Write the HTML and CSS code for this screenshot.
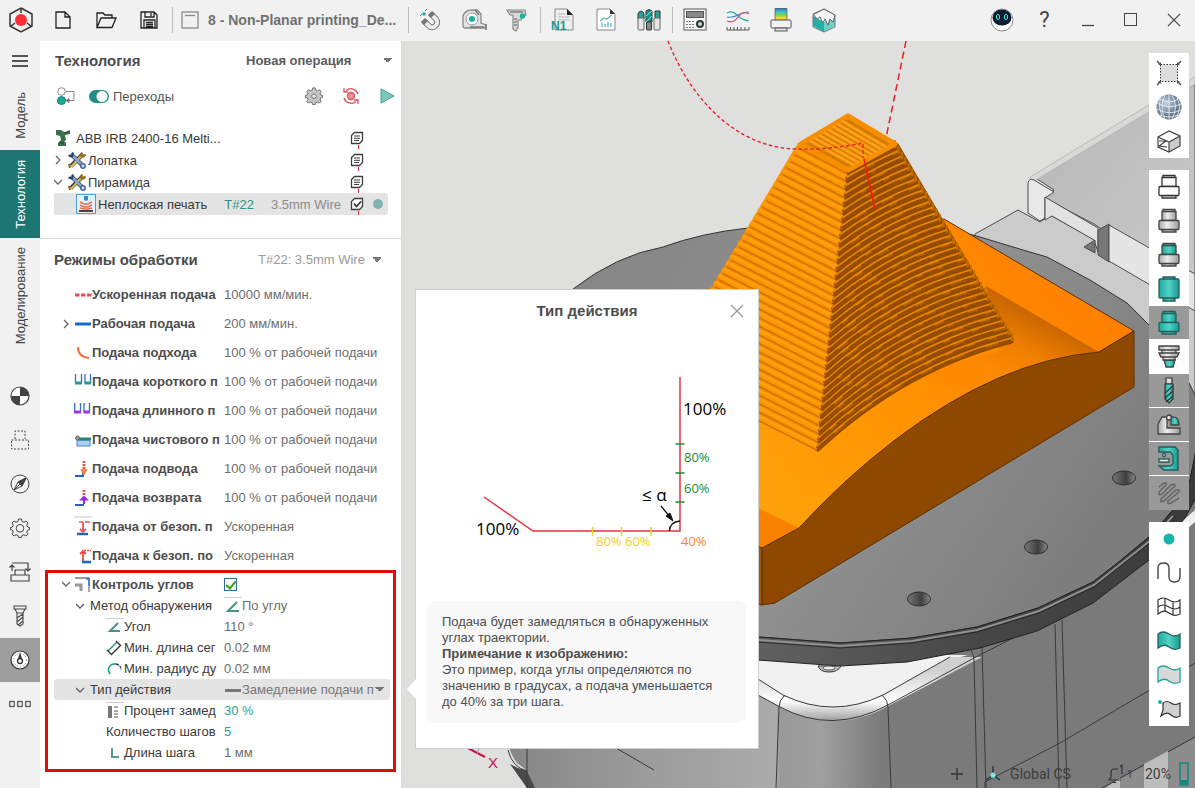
FILE: index.html
```html
<!DOCTYPE html>
<html lang="ru">
<head>
<meta charset="utf-8">
<title>8 - Non-Planar printing</title>
<link rel="stylesheet" href="styles.css">
</head>
<body>
<svg class="defs" width="0" height="0" aria-hidden="true">
  <defs>
    <linearGradient id="gTeal"><stop offset="0" stop-color="#1fa99d"/><stop offset=".5" stop-color="#52d3c8"/><stop offset="1" stop-color="#16998e"/></linearGradient>
    <linearGradient id="gGray"><stop offset="0" stop-color="#a9a9a9"/><stop offset=".4" stop-color="#eee"/><stop offset="1" stop-color="#9c9c9c"/></linearGradient>
    <linearGradient id="gRainbow" x2="0" y2="1"><stop offset="0" stop-color="#4a62b8"/><stop offset=".3" stop-color="#35c3c8"/><stop offset=".55" stop-color="#7fd34c"/><stop offset=".8" stop-color="#ffdf2e"/><stop offset="1" stop-color="#f26522"/></linearGradient>
    <radialGradient id="gBall" cx=".4" cy=".35"><stop offset="0" stop-color="#c3cfdc"/><stop offset="1" stop-color="#66798e"/></radialGradient>
    <g id="wrench">
      <path d="M3 3l12 12" stroke="#4b3d14" stroke-width="4"/><path d="M15 3L3 15" stroke="#1f355c" stroke-width="4"/>
      <path d="M15 3L3 16" stroke="#e0b83c" stroke-width="2.4"/><path d="M14 1.500l-1 3 2.500 1 2-2M1 13l1 4" stroke="#8a6a1c" stroke-width="2" fill="none"/>
      <path d="M3 3l12 12" stroke="#7fa6de" stroke-width="2.600"/><path d="M.5 4.500l3.500 1L5 1.500" stroke="#27426f" stroke-width="2" fill="none"/>
      <circle cx="15" cy="15" r="2.200" fill="#dbe7f8" stroke="#3f66a3" stroke-width="1.500"/>
    </g>
    <g id="note" fill="none" stroke="#3d3d3d"><path d="M4.500 1.500h8v8l-3 3h-8v-8z" fill="#fff" stroke-width="1.300" stroke-linejoin="round"/><path d="M4 5h6M4 7.300h6M4 9.500h5" stroke-width="1"/></g>
  </defs>
</svg>

<div class="app">
<header class="topbar">
  <button class="tb logo" aria-label="Меню приложения"><svg width="28" height="28" viewBox="0 0 28 28"><path d="M14 2l11 6v12l-11 6-11-6V8z" fill="none" stroke="#333" stroke-width="1.500"/><path d="M14 2v5M4 20l4-3M24 20l-4-3" stroke="#333" stroke-width="1.500"/><circle cx="14" cy="14" r="6" fill="#fb2e35"/></svg></button>
  <button class="tb" aria-label="Новый"><svg width="20" height="20" viewBox="0 0 20 20" fill="none" stroke="#222" stroke-width="1.300"><path d="M3 2h9l5 5v11H3zM12 2v5h5"/></svg></button>
  <button class="tb" aria-label="Открыть"><svg width="22" height="20" viewBox="0 0 22 20" fill="none" stroke="#222" stroke-width="1.300"><path d="M2 17.500V3h6l2 2h7v3M2 17.500L6 8h15l-4 9.500z"/></svg></button>
  <button class="tb" aria-label="Сохранить"><svg width="20" height="20" viewBox="0 0 20 20" fill="none" stroke="#222" stroke-width="1.300"><path d="M2 2h13l3 3v13H2zM6 2v5h9V2M12 3v3M5 18v-8h11v8M7 12.500h7M7 14.500h7M7 16.500h7"/></svg></button>
  <span class="sep"></span>
  <div class="doc"><svg width="18" height="18" viewBox="0 0 18 18" fill="none" stroke="#8a8a8a" stroke-width="1.300"><rect x="1" y="1" width="16" height="16"/><path d="M4 4.500h10"/></svg><span class="doc-title">8 - Non-Planar printing_De...</span></div>
  <span class="sep flush"></span>
  <button class="tb" aria-label="Привязка"><svg width="24" height="24" viewBox="0 0 24 24" fill="none"><path d="M12 6l5 5c4 5-3 11-7 7l-5-5" stroke="#777" stroke-width="6"/><path d="M12 6l5 5c4 5-3 11-7 7l-5-5" stroke="#ececec" stroke-width="4"/><path d="M11 5l3 3M4 12l3 3" stroke="#777" stroke-width="6"/><circle cx="5" cy="6" r="1.800" fill="#1fb0a2"/><path d="M1 8l2-2M6 3l2-2" stroke="#777"/></svg></button>
  <button class="tb" aria-label="Измерить"><svg width="26" height="24" viewBox="0 0 26 24"><path d="M2 18V8q2-6 9-6h5l4 4v9l5 2v3H5q-3 0-3-2z" fill="#e4e4e4" stroke="#888" stroke-width="1.300"/><circle cx="11" cy="11" r="6" fill="#fff" stroke="#999"/><circle cx="11" cy="11" r="3" fill="#1fb0a2"/><path d="M14 2l4 5M9 19h14M25 16v6" stroke="#777" stroke-width="1.500"/></svg></button>
  <button class="tb" aria-label="Штангенциркуль"><svg width="24" height="24" viewBox="0 0 24 24"><path d="M2 2h18l1 5-4 1-1 4h-3v8l-2 3-3-2V7H5z" fill="#dadada" stroke="#888" stroke-width="1.200"/><path d="M9 11h3M9 14h3M9 17h3M5 4h13" stroke="#555"/><circle cx="17.500" cy="8" r="2.700" fill="#1fb0a2"/></svg></button>
  <span class="sep"></span>
  <button class="tb" aria-label="Программа"><svg width="24" height="24" viewBox="0 0 24 24"><path d="M4 1h12l6 6v15H4z" fill="#eee" stroke="#888"/><path d="M16 1v6h6z" fill="#222"/><path d="M7 6h7M7 9h12M7 12h12" stroke="#bbb"/><text x="0" y="22" class="n1">N1</text></svg></button>
  <button class="tb" aria-label="Отчёт"><svg width="24" height="24" viewBox="0 0 24 24"><path d="M3 1h13l5 5v16H3z" fill="#fff" stroke="#888"/><path d="M16 1v5h5z" fill="#333"/><path d="M8 19v-4M11 19v-3M14 19v-5M17 19v-4M6 13l4-3 3 1 5-4" fill="none" stroke="#5db5b8" stroke-width="1.300"/></svg></button>
  <button class="tb" aria-label="Инструменты"><svg width="26" height="24" viewBox="0 0 26 24"><path d="M2 11V6q0-2 3-3 3 1 3 3v5zM19 11V3h5v8z" fill="#27a398" stroke="#333"/><path d="M10 14V3q3-3 6 0v11z" fill="#14988d" stroke="#333"/><path d="M10 8l6-5M10 14l6-6" stroke="#7be0d6"/><rect x="2" y="10" width="6" height="12" rx="1" fill="#e6e6e6" stroke="#666"/><rect x="10.500" y="14" width="5" height="8" rx="1" fill="#888" stroke="#333"/><rect x="18" y="10" width="6" height="12" rx="1" fill="#e6e6e6" stroke="#666"/></svg></button>
  <span class="sep"></span>
  <button class="tb" aria-label="Калькулятор"><svg width="24" height="24" viewBox="0 0 24 24"><rect x="1" y="1" width="22" height="21" fill="#f7f7f7" stroke="#555"/><rect x="3.500" y="3.500" width="17" height="6" fill="#888" stroke="#555"/><path d="M3 13.500h9M3 16.500h9M3 19.500h9" stroke="#777" stroke-dasharray="2 1"/><circle cx="17" cy="16" r="4" fill="#333"/><circle cx="17" cy="16" r="2" fill="#a4e4dd"/></svg></button>
  <button class="tb" aria-label="График"><svg width="24" height="24" viewBox="0 0 24 24" fill="none" stroke-width="1.200"><path d="M1 5q5-3 10 2t12 6" stroke="#27ad9f"/><path d="M1 9q6 1 11-2t11-3" stroke="#3f87c7"/><path d="M1 13q6 3 11-4t11-3" stroke="#d94a7b"/><path d="M1 19v3h22v-3M4.500 19v3M8 19v3M11.500 19v3M15 19v3M19 19v3" stroke="#555" stroke-width="1"/></svg></button>
  <button class="tb" aria-label="Анализ"><svg width="22" height="24" viewBox="0 0 22 24"><rect x="5" y="0" width="12" height="13" rx="1" fill="url(#gRainbow)" stroke="#555" stroke-width=".7"/><rect x="1" y="12" width="20" height="8" rx="1" fill="#f3f3f3" stroke="#555"/><rect x="5" y="20" width="12" height="3" fill="#ddd" stroke="#555"/></svg></button>
  <button class="tb" aria-label="Симуляция"><svg width="26" height="26" viewBox="0 0 26 26"><path d="M2 9l11 6v10L2 19z" fill="#26b0a3"/><path d="M13 15l11-6v10l-11 6z" fill="#6bcfc6"/><path d="M13 2l11 6-2 7-3-3-2 6-3-6-2 4-3-6-3 2-4-5z" fill="#f5f5f5" stroke="#666"/><path d="M13 2L2 8v12l11 5 11-5V8z" fill="none" stroke="#777"/></svg></button>
  <div class="window-tools">
    <button class="tb" aria-label="Помощник"><svg width="24" height="24" viewBox="0 0 24 24"><circle cx="12" cy="12" r="11" fill="#fff" stroke="#8c8c94"/><ellipse cx="12" cy="9.500" rx="9.500" ry="8" fill="#0b1c33"/><rect x="6.500" y="6.500" width="3" height="5" rx="1.500" fill="none" stroke="#42e3c5"/><rect x="14.500" y="6.500" width="3" height="5" rx="1.500" fill="none" stroke="#42e3c5"/></svg></button>
    <button class="tb help" aria-label="Справка">?</button>
    <button class="tb" aria-label="Свернуть"><svg width="14" height="14"><path d="M1 12.500h12" stroke="#444" stroke-width="1.300"/></svg></button>
    <button class="tb" aria-label="Развернуть"><svg width="14" height="14"><rect x=".5" y=".5" width="12" height="12" fill="none" stroke="#444"/></svg></button>
    <button class="tb" aria-label="Закрыть"><svg width="14" height="14"><path d="M1 1l12 12M13 1L1 13" stroke="#555" stroke-width="1.200"/></svg></button>
  </div>
</header>

<nav class="rail">
  <button class="rail-menu" aria-label="Меню"><svg width="16" height="14"><path d="M0 2h16M0 7h16M0 12h16" stroke="#555" stroke-width="2"/></svg></button>
  <button class="rail-tab t1"><span>Модель</span></button>
  <button class="rail-tab t2 active"><span>Технология</span></button>
  <button class="rail-tab t3"><span>Моделирование</span></button>
  <button class="rail-icon" aria-label="Центр"><svg width="20" height="20" viewBox="0 0 20 20"><circle cx="10" cy="10" r="9" fill="#fff" stroke="#444" stroke-width="1.200"/><path d="M10 10V1a9 9 0 0 1 9 9zM10 10v9a9 9 0 0 1-9-9z" fill="#444"/></svg></button>
  <button class="rail-icon" aria-label="Заготовка"><svg width="20" height="20" viewBox="0 0 20 20" fill="none" stroke="#444" stroke-dasharray="2 1.500"><path d="M5 9V1h10v8"/><rect x="1.500" y="10" width="17" height="9"/></svg></button>
  <button class="rail-icon" aria-label="Стратегия"><svg width="20" height="20" viewBox="0 0 20 20" fill="none" stroke="#444"><circle cx="10" cy="10" r="9"/><path d="M16 4l-4 8-8 4 4-8z"/><path d="M8 8l4 4 4-8zM5 15l6-6" fill="#444"/></svg></button>
  <button class="rail-icon" aria-label="Настройки"><svg width="20" height="20" viewBox="0 0 20 20" fill="none" stroke="#444"><path d="M8.500 1h3l.5 2.500 2 .8L16 3l2 2-1.200 2 .8 2 2 .5v2l-2 .7-.8 2L18 16l-2 2-2-1.300-2 .8-.5 2h-3l-.5-2-2-.8L4 18l-2-2 1.200-2-.8-2-2-.5v-2l2-.5.8-2L2 5l2-2 2 1.300 2-.8z"/><circle cx="10" cy="10.300" r="3.800"/></svg></button>
  <button class="rail-icon" aria-label="Подходы"><svg width="22" height="20" viewBox="0 0 22 20" fill="none" stroke="#444" stroke-width="1.200"><path d="M3 9V3M3 1h16v8M.500 5.500L3 3l2.500 2.500M16.500 6.500L19 9l2.500-2.500M6 13V8h10v5M2 13h18v6H2z"/></svg></button>
  <button class="rail-icon" aria-label="Инструмент"><svg width="14" height="22" viewBox="0 0 14 22" fill="none" stroke="#444" stroke-width="1.100"><path d="M1 1h12v3H1zM2 4l2 4h6l2-4M4 8v11l3 2 3-2V8M4 13l6-4M4 17l6-5M5 20l5-4"/></svg></button>
  <button class="rail-icon on" aria-label="Режимы"><svg width="20" height="20" viewBox="0 0 20 20"><circle cx="10" cy="10" r="9" fill="#fff" stroke="#333" stroke-width="1.200"/><circle cx="10" cy="11" r="2.500" fill="none" stroke="#333" stroke-width="1.300"/><path d="M8 9l2-7 2 7z" fill="#333"/><circle cx="10" cy="10" r="6.500" fill="none" stroke="#777" stroke-dasharray="1 2"/></svg></button>
  <button class="rail-icon" aria-label="Ещё"><svg width="22" height="8" viewBox="0 0 22 8" fill="none" stroke="#555" stroke-width="1.200"><rect x=".7" y="1.500" width="4.500" height="5"/><rect x="8.700" y="1.500" width="4.500" height="5"/><rect x="16.700" y="1.500" width="4.500" height="5"/></svg></button>
</nav>

<aside class="panel">
  <section class="tech">
    <div class="panel-head">
      <h2>Технология</h2>
      <select class="pick bold" aria-label="Новая операция"><option>Новая операция</option></select>
    </div>
    <div class="tools-row">
      <button class="plain" aria-label="Порядок"><svg width="18" height="18" viewBox="0 0 18 18" fill="none" stroke="#888"><circle cx="4.500" cy="4.500" r="3.800"/><path d="M9 4.500h8v9h-7"/><circle cx="4.500" cy="13.500" r="4" fill="#1aa898" stroke="#1a7f76"/><path d="M12 11.500l-3 2 3 2z" fill="#555"/></svg></button>
      <label class="toggle"><input type="checkbox" checked><span>Переходы</span></label>
      <button class="plain push" aria-label="Параметры"><svg width="18" height="18" viewBox="0 0 20 20"><path d="M8.500 1h3l.5 2.500 2 .8L16 3l2 2-1.200 2 .8 2 2 .5v2l-2 .7-.8 2L18 16l-2 2-2-1.300-2 .8-.5 2h-3l-.5-2-2-.8L4 18l-2-2 1.200-2-.8-2-2-.5v-2l2-.5.8-2L2 5l2-2 2 1.300 2-.8z" fill="#c4c4c4" stroke="#666"/><circle cx="10" cy="10.300" r="2.500" fill="#eee" stroke="#666"/></svg></button>
      <button class="plain" aria-label="Сброс"><svg width="18" height="18" viewBox="0 0 18 18" fill="none" stroke="#e0505a" stroke-width="1.300"><path d="M16 7A7.500 7.500 0 0 0 4 3.500M2 11a7.500 7.500 0 0 0 12 3.500M2 1v4h4M16 17v-4h-4"/><circle cx="9" cy="9" r="3.500" fill="#ef8f95"/></svg></button>
      <button class="plain" aria-label="Запуск"><svg width="16" height="16" viewBox="0 0 16 16"><path d="M2 1l13 7-13 7z" fill="#7cc9bb" stroke="#3d9a8c"/></svg></button>
    </div>
    <ul class="tree">
      <li><svg class="lead" width="16" height="18" viewBox="0 0 16 18"><path d="M1 1h5l3 2h6v2l-5 1 1 5-2 2 1 2h1v2H3v-3l3-3-1-4-4-1z" fill="#3f6e4c"/><path d="M10 4l5-2M4 14h7" stroke="#29503a" stroke-width="1.500"/></svg><span class="tree-name">ABB IRB 2400-16 Melti...</span><svg class="mark" width="14" height="14"><use href="#note"/></svg></li>
      <li><svg class="chev" width="9" height="10"><path d="M2 1l4 4-4 4" fill="none" stroke="#666" stroke-width="1.300"/></svg><svg width="18" height="18"><use href="#wrench"/></svg><span class="tree-name">Лопатка</span><svg class="mark" width="14" height="14"><use href="#note"/></svg></li>
      <li><svg class="chev" width="9" height="10"><path d="M0 3l4 4 4-4" fill="none" stroke="#666" stroke-width="1.300"/></svg><svg width="18" height="18"><use href="#wrench"/></svg><span class="tree-name">Пирамида</span><svg class="mark" width="14" height="14"><use href="#note"/></svg></li>
      <li class="sel"><svg class="op" width="20" height="20" viewBox="0 0 20 20"><rect x=".5" y=".5" width="19" height="19" fill="#e3f1fc" stroke="#4d9ee0"/><path d="M8 2h4v4l-2 1-2-1z" fill="#3f86c5"/><path d="M4 8l4 2h4l4-2M4 11l4 2h4l4-2M4 14l4 1h4l4-1" stroke="#ea6a4c" stroke-width="1.500" fill="none"/><path d="M3 17h14" stroke="#444" stroke-width="2"/></svg><span class="tree-name">Неплоская печать</span><span class="tool-no">T#22</span><span class="tool-name">3.5mm Wire</span><svg class="mark" width="14" height="14"><path d="M4.500 1.500h8v8l-3 3h-8v-8z" fill="#fff" stroke="#3d3d3d" stroke-width="1.300"/><path d="M4 6.500l2.500 3 4.500-5" fill="none" stroke="#333" stroke-width="1.800"/></svg><i class="dot"></i></li>
    </ul>
  </section>

  <section class="modes">
    <div class="panel-head second">
      <h2>Режимы обработки</h2>
      <select class="pick soft" aria-label="Инструмент"><option>T#22: 3.5mm Wire</option></select>
    </div>
    <div class="rows">
      <div class="row"><div class="name b i1"><svg width="18" height="16"><path d="M1 8h17" stroke="#ef4a5b" stroke-width="3" stroke-dasharray="4.500 1.500"/></svg>Ускоренная подача</div><span class="val">10000 мм/мин.</span></div>
      <div class="row"><div class="name b i0"><svg class="chev" width="9" height="10"><path d="M2 1l4 4-4 4" fill="none" stroke="#666" stroke-width="1.300"/></svg><svg width="18" height="16"><path d="M1 8h16" stroke="#1769d1" stroke-width="3"/></svg>Рабочая подача</div><span class="val">200 мм/мин.</span></div>
      <div class="row"><div class="name b i1"><svg width="18" height="16"><path d="M4 2q0 10 11 11" fill="none" stroke="#f0713c" stroke-width="2"/></svg>Подача подхода</div><span class="val">100 % от рабочей подачи</span></div>
      <div class="row"><div class="name b i1"><svg width="18" height="16"><path d="M1.500 0v9M7.500 0v9M11 0v9M16.500 0v9" stroke="#2f6ec0" stroke-width="1.300"/><path d="M1 9h7M10.500 9h6.500" stroke="#1f9b8c" stroke-width="3"/></svg>Подача короткого п</div><span class="val">100 % от рабочей подачи</span></div>
      <div class="row"><div class="name b i1"><svg width="18" height="16"><path d="M.7 0v9M6.500 0v9M10 0v9M15.500 0v9" stroke="#2f6ec0" stroke-width="1.300"/><path d="M0 9h7M9.500 9h6.500" stroke="#9a35e8" stroke-width="3"/></svg>Подача длинного п</div><span class="val">100 % от рабочей подачи</span></div>
      <div class="row"><div class="name b i1"><svg width="18" height="16"><rect x="3" y="8" width="13" height="6" fill="#a8cef5" stroke="#4d83c2"/><path d="M4 7h13" stroke="#238575" stroke-width="3"/><circle cx="3.500" cy="6" r="2" fill="#999" stroke="#666"/></svg>Подача чистового п</div><span class="val">100 % от рабочей подачи</span></div>
      <div class="row"><div class="name b i1"><svg width="18" height="18"><path d="M1 16h8v-5" fill="none" stroke="#1e66c5" stroke-width="2"/><path d="M10 1v8" stroke="#e75a50" stroke-width="3" stroke-dasharray="2 1"/><path d="M7.500 10h5L10 14z" stroke="#fa7c38" stroke-width="1.500" fill="#fa7c38"/></svg>Подача подвода</div><span class="val">100 % от рабочей подачи</span></div>
      <div class="row"><div class="name b i1"><svg width="18" height="18"><path d="M1 16h9" stroke="#1e66c5" stroke-width="2"/><path d="M10 1v5" stroke="#e75a50" stroke-width="3" stroke-dasharray="2 1"/><path d="M10 15v-4M7.500 10.500L10 8l2.500 2.500z" stroke="#8f2ae0" stroke-width="2" fill="#8f2ae0"/></svg>Подача возврата</div><span class="val">100 % от рабочей подачи</span></div>
      <div class="row"><div class="name b i1"><svg width="18" height="22"><path d="M0 1h18" stroke="#c9c9c9"/><path d="M5 6h4M11 6h5" stroke="#e9545f" stroke-width="1.500"/><path d="M9 6v10M6 13l3 3 3-3" fill="none" stroke="#e9545f" stroke-width="1.800"/><path d="M3 18h11" stroke="#1e66c5" stroke-width="2.500"/></svg>Подача от безоп. п</div><span class="val">Ускоренная</span></div>
      <div class="row"><div class="name b i1"><svg width="18" height="18"><path d="M9 14V5M6 7l3-3 3 3" fill="none" stroke="#f04a44" stroke-width="1.800"/><path d="M10 3.500h7" stroke="#f04a44" stroke-width="1.500" stroke-dasharray="2 1"/><path d="M8 15h9" stroke="#1e66c5" stroke-width="2.500"/></svg>Подача к безоп. по</div><span class="val">Ускоренная</span></div>
    </div>
    <div class="rows corner">
      <div class="row first"><div class="name b i0"><svg class="chev" width="9" height="10"><path d="M0 3l4 4 4-4" fill="none" stroke="#666" stroke-width="1.300"/></svg><svg width="18" height="18"><path d="M1 3h14v14" fill="none" stroke="#777" stroke-width="1.300"/><path d="M12 4h3v7" fill="none" stroke="#2f78d0" stroke-width="1.500"/><path d="M1 10h6v6" fill="none" stroke="#999" stroke-width="3"/></svg><label for="corners">Контроль углов</label></div><input class="check" type="checkbox" id="corners" checked></div>
      <div class="row"><div class="name i2"><svg class="chev" width="9" height="10"><path d="M0 3l4 4 4-4" fill="none" stroke="#666" stroke-width="1.300"/></svg>Метод обнаружения</div><svg width="18" height="18"><path d="M0 .5h18" stroke="#ccc"/><path d="M13 5L4 14h11" fill="none" stroke="#4a9284" stroke-width="2"/></svg><span class="val">По углу</span></div>
      <div class="row"><div class="name i3"><svg width="18" height="18"><path d="M0 .5h18" stroke="#ccc"/><path d="M12 5L4 13h10" fill="none" stroke="#4a9284" stroke-width="2"/></svg>Угол</div><span class="val">110 °</span></div>
      <div class="row"><div class="name i3"><svg width="18" height="18" fill="none"><path d="M2 12l9-9" stroke="#279887" stroke-width="1.500"/><path d="M5 16l10-10M1 11l5 5M10 2l5 5" stroke="#333" stroke-width="1.300"/></svg>Мин. длина сег</div><span class="val">0.02 мм</span></div>
      <div class="row"><div class="name i3"><svg width="18" height="18" fill="none"><path d="M4 14C0 8 5 3 10 4" stroke="#209d86" stroke-width="1.600"/><path d="M10 4q5 1 5 6" stroke="#333" stroke-width="1.300" stroke-dasharray="3 1"/></svg>Мин. радиус ду</div><span class="val">0.02 мм</span></div>
      <div class="row sel"><div class="name i2"><svg class="chev" width="9" height="10"><path d="M0 3l4 4 4-4" fill="none" stroke="#666" stroke-width="1.300"/></svg><label for="action">Тип действия</label></div><svg width="18" height="18"><path d="M1 9.500h16" stroke="#777" stroke-width="3"/></svg><select id="action" class="pick action"><option>Замедление подачи п</option></select></div>
      <div class="row"><div class="name i3"><svg width="18" height="18"><path d="M0 .5h18" stroke="#ccc"/><rect x="2" y="4" width="4" height="12" fill="#777"/><path d="M8 5h4M8 9h4M8 12h4M8 15h4" stroke="#555"/></svg>Процент замед</div><span class="val teal">30 %</span></div>
      <div class="row"><div class="name i3">Количество шагов</div><span class="val teal">5</span></div>
      <div class="row"><div class="name i3"><svg width="18" height="18"><path d="M6 4v9h7" fill="none" stroke="#579b91" stroke-width="2"/></svg>Длина шага</div><span class="val">1 мм</span></div>
    </div>
  </section>
</aside>

<main class="view">
  <svg class="scene" viewBox="402 41 793 747" preserveAspectRatio="xMinYMin slice" role="img" aria-label="Модель">
    <defs>
      <linearGradient id="disk" x1="0" x2="1" y1="0" y2=".4"><stop offset="0" stop-color="#828282"/><stop offset=".6" stop-color="#929292"/><stop offset="1" stop-color="#7d7d7d"/></linearGradient>
      <linearGradient id="rim"><stop offset="0" stop-color="#606060"/><stop offset=".5" stop-color="#474747"/><stop offset="1" stop-color="#3a3a3a"/></linearGradient>
      <linearGradient id="body" gradientUnits="userSpaceOnUse" x1="500" x2="900" y1="0" y2="0"><stop offset="0" stop-color="#858585"/><stop offset=".35" stop-color="#9b9b9b"/><stop offset=".69" stop-color="#ababab"/><stop offset=".7" stop-color="#999"/><stop offset=".8" stop-color="#a0a0a0"/><stop offset=".95" stop-color="#7b7b7b"/><stop offset="1" stop-color="#7a7a7a"/></linearGradient>
      <linearGradient id="topface" gradientUnits="userSpaceOnUse" x1="760" y1="520" x2="1080" y2="270"><stop offset="0" stop-color="#ffa30c"/><stop offset=".4" stop-color="#ff9400"/><stop offset="1" stop-color="#ff8000"/></linearGradient>
      <linearGradient id="hollow" gradientUnits="userSpaceOnUse" x1="1055" y1="315" x2="1018" y2="385"><stop offset="0" stop-color="#c06000"/><stop offset=".55" stop-color="#ee7e00"/><stop offset="1" stop-color="#ff8a00"/></linearGradient>
      <linearGradient id="plate" x1="0" y1="0" x2="1" y2="1"><stop offset="0" stop-color="#b6b6b6"/><stop offset="1" stop-color="#c9c9c9"/></linearGradient>
      <linearGradient id="hole"><stop offset="0" stop-color="#777"/><stop offset=".6" stop-color="#3f3f3f"/><stop offset="1" stop-color="#8a8a8a"/></linearGradient>
      <linearGradient id="lip" gradientUnits="userSpaceOnUse" x1="0" x2="0" y1="670" y2="722"><stop offset="0" stop-color="#d0d0d0"/><stop offset=".6" stop-color="#fff"/><stop offset="1" stop-color="#999"/></linearGradient>
    </defs>
    <rect x="402" y="41" width="793" height="747" fill="#dfdfdd"/>
    <g stroke="#4d4d4d" stroke-linejoin="round">
      <path d="M975 234l43-24 22 12 10-7 145 80v200L960 300z" fill="#cbcbcb"/>
      <path d="M1034 177L1195 84v200l-77-44-24-16-50-26 10-8z" fill="url(#plate)"/>
      <path d="M1034 181L1195 84v-7L1030 177z" fill="#d8d8d6" stroke="#bbb"/>
      <path d="M1028 213v-30q1-5 6-3l20 12-9 6v20l-5 3z" fill="#e8e8e8"/>
      <path d="M1045 197l53 31v24l-4-12-42-24-7 4z" fill="#e2e2e2"/>
      <path d="M1098 230l11-6v38l-11-7z" fill="#777"/><path d="M1109 225l86 49v37l-86-50z" fill="#e5e5e5"/>
      <path d="M1084 247l11-7v13z" fill="#777"/>
    </g>
    <path d="M507 740q4 16 10 23 10 7 10 9l6 16h662V470L960 590 758 655v93z" fill="url(#body)"/>
    <path d="M510 764l8 4 9 3 8 17h-8z" fill="#4a4a4a"/>
    <path d="M1172 530l23-20v12l-23 20z" fill="#eee"/>
    <path d="M758 655h210l-18 5-67 35q-50 25-100 0l-25-15z" fill="#f1f1f1"/>
    <path d="M758 679l25 16q50 24 100 0l67-38h32l-94 49q-52 30-108 1l-22-12z" fill="url(#lip)"/>
    <g fill="none" stroke="#3a3a3a">
      <path d="M758 679l25 16q50 24 100 0l67-38M758 695l22 12q52 28 108-2l86-47 39-20"/>
      <path d="M785 695q-6 5-6 12l-3 81M882 695q6 5 6 12l3 81M971 650q3 5 3 10l3 128M982 646l4 142M1055 624l4 164M1062 620l5 168M985 782l75-39 88-52 47-28M527 748v40M508 750q4 17 19 21M616 748l38 22M985 782v6"/>
    </g>
    <path d="M1102 788l93-51v51z" fill="#8d8d8d"/><path d="M1102 788l93-51" stroke="#333"/><path d="M1120 778v10h-14M1144 764l24-13v37h-24z" fill="#bdbdbd"/>
    <path d="M573 289q44-34 90-42 38-14 85-19 140-20 232 9l43 13 24 7 43 23 37 23 22 22 26 30 20 40 5 35-10 50-17 30-24 27-34 28-22 17-55 26-61 19-65 11-72 5-80-6H500z" fill="url(#disk)" stroke="#333"/>
    <path d="M758 637l82 6 72-5 65-11 61-19 55-26 22-17 34-28 24-27 17-30 10-50v60l-15 28-36 42-56 43-56 28-57 17-73 14-67 4-82-6z" fill="url(#rim)" stroke="#222"/>
    <path d="M758 640l82 6 72-5 65-11 62-19 55-26 57-45 22-24" fill="none" stroke="#8f8f8f" stroke-width="2"/>
    <path d="M758 642l82 6 72-5 65-11 62-19 55-26 57-45 24-26" fill="none" stroke="#222" stroke-width=".8"/>
    <path d="M818 666h23q-3 6-12 6t-11-6z" fill="#bdbdbd" stroke="#333"/><ellipse cx="829" cy="668" rx="6" ry="2" fill="#eee" stroke="#555"/>
    <g fill="url(#hole)" stroke="#2e2e2e"><ellipse cx="1124" cy="478" rx="11.500" ry="7"/><ellipse cx="1036" cy="547" rx="11.500" ry="7"/><ellipse cx="919" cy="599" rx="11.500" ry="7"/></g>
    <g stroke="#5a3300" stroke-linejoin="round">
      <path d="M944 219l190 112-35 21-300 176-37 20-12-8V290z" fill="url(#topface)"/>
      <path d="M986 286l113 66q-60 7-130 40l-60-20 90-20z" fill="url(#hollow)" stroke="none"/>
      <path d="M758 508l41 20-37 20-4-2z" fill="#f88200" stroke="none"/>
      <path d="M762 548l37-20Q845 478 895 440 1000 360 1099 352l35-21v56L775 603l-13 2z" fill="#8f4800"/>
      <path d="M755 545l7 3v57l-7-2z" fill="#a75400"/>
    </g>
    <g id="print"></g>
    <path d="M668 41c26 66 75 108 130 108q30 1 65-6v15" fill="none" stroke="#e81e2c" stroke-width="1.400" stroke-dasharray="3.500 2.500"/>
    <path d="M906 41l-20 97" stroke="#e81e2c" stroke-width="1.500" stroke-dasharray="7 4"/><path d="M864 159l11 50" stroke="#f21b10" stroke-width="1.700"/>
    <path d="M462 745l23 12" stroke="#c4154c" stroke-width="2"/><path d="M477 754l3-8 15-5" stroke="#999" fill="none"/><text x="488" y="768" class="axis">X</text>
  </svg>

  <div class="strip">
    <div class="group tall">
      <button aria-label="Показать всё"><svg width="26" height="26" viewBox="0 0 26 26"><rect x="4.500" y="4.500" width="17" height="17" fill="#ddd" stroke="#333" stroke-dasharray="1.500 1.500"/><path d="M1 1l4 4M25 1l-4 4M1 25l4-4M25 25l-4-4" stroke="#444" stroke-width="1.300"/><path d="M2 5h3V2zM24 5h-3V2zM2 21h3v3zM24 21h-3v3z" fill="#555"/></svg></button>
      <button aria-label="Вид"><svg width="28" height="28" viewBox="0 0 28 28"><circle cx="14" cy="14" r="12.500" fill="url(#gBall)"/><path d="M2 10q12 7 24 1M2 16q12 7 24 1M5 6q10 6 18 0M5 22q9 4 18 0M10 2q-6 12 0 24M17 2q7 12 0 24M5 5q-2 10 2 18M22 5q5 9 0 18M14 2v24" fill="none" stroke="#eef4fa" stroke-width=".8"/></svg></button>
      <button aria-label="Проекция"><svg width="26" height="24" viewBox="0 0 26 24"><path d="M13 13l11-6v10l-11 6z" fill="#ccc"/><path d="M2 8l11-6 11 5v10l-11 6-11-5zM2 8l11 5 11-6M13 13v10M3 12l7 0-7 5 8 1" fill="none" stroke="#444" stroke-width="1.200"/></svg></button>
    </div>
    <div class="group">
      <button aria-label="Контур"><svg width="24" height="26" viewBox="0 0 24 26" fill="#fff" stroke="#333" stroke-width="1.300"><path d="M6 1.500h12v2h1v9H5v-9h1zM5 3.500h14M5 21.500h14V24H5z"/><rect x="2" y="12.500" width="20" height="9" rx="1"/></svg></button>
      <button aria-label="Тело"><svg width="24" height="26" viewBox="0 0 24 26" fill="url(#gGray)" stroke="#444" stroke-width="1.300"><path d="M6 1.500h12v2h1v9H5v-9h1zM5 3.500h14M5 21.500h14V24H5z"/><rect x="2" y="12.500" width="20" height="9" rx="1"/></svg></button>
      <button aria-label="Деталь"><svg width="24" height="26" viewBox="0 0 24 26" fill="url(#gGray)" stroke="#444" stroke-width="1.300"><path fill="url(#gTeal)" d="M6 1.500h12v2h1v9H5v-9h1zM5 3.500h14"/><path d="M5 21.500h14V24H5z"/><rect x="2" y="12.500" width="20" height="9" rx="1"/></svg></button>
      <button aria-label="Заготовка"><svg width="24" height="26" viewBox="0 0 24 26" fill="url(#gTeal)" stroke="#265f5b" stroke-width="1.300"><path d="M6 1h12v3H6zM6 22h12v3H6z"/><rect x="2" y="3" width="20" height="19" rx="1"/></svg></button>
      <button class="on" aria-label="Результат"><svg width="24" height="26" viewBox="0 0 24 26" fill="url(#gTeal)" stroke="#265f5b" stroke-width="1.300"><path d="M6 1.500h12v2h1v9H5v-9h1zM5 3.500h14M5 21.500h14V24H5z"/><rect x="2" y="12.500" width="20" height="9" rx="1"/></svg></button>
      <button aria-label="Патрон"><svg width="22" height="24" viewBox="0 0 22 24" fill="url(#gGray)" stroke="#444" stroke-width="1.300"><path fill="url(#gTeal)" d="M6 15h11l-2 7H8z"/><path d="M1 1h20v4H1zM4 5h14v3H4zM1 8h20l-2 4H3zM5 12h12v3H5z"/></svg></button>
      <button class="on" aria-label="Фреза"><svg width="12" height="28" viewBox="0 0 12 28" stroke="#333" stroke-width="1.200"><path d="M3 1h6v6H3z" fill="#ddd"/><path d="M2 7h8v15l-4 4-4-4z" fill="url(#gTeal)"/><path d="M2 16l8-7M2 21l8-7M3 25l7-6"/></svg></button>
      <button class="on" aria-label="Оснастка"><svg width="24" height="22" viewBox="0 0 24 22" fill="url(#gGray)" stroke="#444" stroke-width="1.300"><path d="M1 20V10l4-7h5v11h13v6z"/><path d="M14 3q8-1 8 8h-8z" fill="url(#gTeal)"/><circle cx="12" cy="3.500" r="2.500"/></svg></button>
      <button class="on" aria-label="Станок"><svg width="22" height="26" viewBox="0 0 22 26" stroke="#285b58" stroke-width="1.400"><path d="M1 1h16l3 3v20H6l-5-4h11l3-2V9l-3-3H1z" fill="url(#gTeal)"/><rect x="1" y="13" width="10" height="3" fill="#eee"/><circle cx="6" cy="9" r="1.500" fill="#fff"/></svg></button>
      <button class="on" aria-label="Траектория"><svg width="24" height="24" viewBox="0 0 24 24" fill="none" stroke="#666" stroke-width="1.600"><path d="M2 6l5-4q3-1 2 2l-7 7q-1 4 3 2L14 4q4-2 4 1L4 18q-1 4 3 2L19 9q4-1 3 2l-11 9q-1 4 3 2l8-5"/></svg></button>
    </div>
    <div class="group">
      <button aria-label="Точки"><svg width="12" height="12"><circle cx="6" cy="6" r="5.500" fill="#17b5aa"/></svg></button>
      <button aria-label="Кривые"><svg width="24" height="22" viewBox="0 0 24 22" fill="none" stroke="#444" stroke-width="1.400"><path d="M1 17V6q0-5 5.500-5T12 6v9q0 5 5.500 5t5.500-5V6"/></svg></button>
      <button aria-label="Сетка"><svg width="24" height="20" viewBox="0 0 24 20" fill="none" stroke="#333" stroke-width="1.200"><path d="M1 3q5-4 11 0t11 0v14q-6 3-11-1t-11 1zM1 10q5-4 11 0t11 0M8 1v14M16 4v14"/></svg></button>
      <button aria-label="Поверхности"><svg width="24" height="20" viewBox="0 0 24 20"><path d="M1 3q5-4 11 0t11 0v14q-6 3-11-1t-11 1z" fill="url(#gTeal)" stroke="#28625f" stroke-width="1.300"/></svg></button>
      <button aria-label="Грани"><svg width="24" height="20" viewBox="0 0 24 20"><path d="M1 3q5-4 11 0t11 0v14q-6 3-11-1t-11 1z" fill="#d8d8d8" stroke="#1aa798" stroke-width="1.300"/></svg></button>
      <button aria-label="Вершины"><svg width="24" height="20" viewBox="0 0 24 20"><path d="M6 4q4-3 8 0t9 0v13q-5 3-9-1t-10 1l2-6z" fill="#d0d0d0" stroke="#333" stroke-width="1.200"/><circle cx="3" cy="3" r="2" fill="#17b5aa"/></svg></button>
    </div>
  </div>

  <div class="status">
    <button class="plain" aria-label="Добавить"><svg width="14" height="14"><path d="M7 1v12M1 7h12" stroke="#333" stroke-width="1.300"/></svg></button>
    <svg class="cs" width="18" height="18" viewBox="0 0 18 18"><path d="M9 7l4 6H5z" fill="#33b9ac"/><path d="M9 1v9L2 15M9 10l7 5" fill="none" stroke="#234" stroke-width="1.400"/><circle cx="9" cy="10" r="2.500" fill="#8be0d8"/></svg>
    <span>Global CS</span>
    <svg class="bell" width="18" height="20" viewBox="0 0 18 20" fill="none" stroke="#333" stroke-width="1.200"><path d="M11 5H7Q4 5 4 9v4l-2 3h12M6 18q2 1 3 0M13 3l2-2v9"/></svg>
    <span class="small">1</span><span class="pct">20%</span>
    <svg width="10" height="24"><rect x="1" y="1" width="8" height="22" fill="none" stroke="#14877e" stroke-width="1.600"/><rect x="2" y="18" width="6" height="4" fill="#14877e"/></svg>
  </div>

  <section class="pop" role="dialog" aria-labelledby="pop-title">
    <svg class="pop-arrow" width="10" height="20"><path d="M10 0L1 10l9 10z" fill="#fff"/></svg>
    <header><h3 id="pop-title">Тип действия</h3><button class="plain" aria-label="Закрыть подсказку"><svg width="14" height="14"><path d="M1 1l12 12M13 1L1 13" stroke="#999" stroke-width="1.300"/></svg></button></header>
    <svg class="chart" viewBox="416 332 342 260" role="img" aria-label="Схема замедления">
      <path d="M484 497l49 34h147V377" fill="none" stroke="#e0383f" stroke-width="1.500"/>
      <path d="M675.500 444h9M675.500 473h9M675.500 502h9" stroke="#1d8a2a" stroke-width="1.500"/>
      <path d="M592.500 527v9M621.500 527v9M651 527v9" stroke="#f0cf24" stroke-width="1.500"/>
      <path d="M669.500 531q0-9 10.500-10M661 506l9 11" fill="none" stroke="#111" stroke-width="1.300"/><path d="M673 521l-7-5 4-3z" fill="#111" stroke="#111"/>
      <text x="683" y="415" class="big">100%</text><text x="476" y="535" class="big">100%</text><text x="642" y="501" class="alpha">≤ α</text>
      <text x="684" y="462" class="green">80%</text><text x="684" y="493" class="green">60%</text><text x="596" y="546" class="yellow">80%</text><text x="625" y="546" class="yellow">60%</text><text x="681" y="546" class="orange">40%</text>
    </svg>
    <div class="desc">Подача будет замедляться в обнаруженных углах траектории.<br><b>Примечание к изображению:</b><br>Это пример, когда углы определяются по значению в градусах, а подача уменьшается до 40% за три шага.</div>
  </section>
</main>
</div>
<script src="scene.js"></script>
</body>
</html>
```
FILE: styles.css
```css
* { box-sizing: border-box; }
body { margin: 0; font: 13px "Liberation Sans", Arial, sans-serif; color: #444; }
button { border: 0; padding: 0; background: none; font: inherit; color: inherit; display: flex; align-items: center; justify-content: center; }
svg { display: block; flex: none; }
h2, h3 { margin: 0; font-size: 15px; line-height: 18px; font-weight: bold; color: #4d4d4d; }
.defs { position: absolute; }
.app { display: grid; height: 100vh; grid-template: 41px 1fr / 40px 362px 1fr; overflow: hidden; }

.topbar { grid-column: 1 / -1; background: #f1f1f1; display: flex; align-items: center; padding-bottom: 2px; }
.tb { width: 43px; height: 39px; flex: none; }
.tb.logo { width: 41px; }
.sep { width: 1px; height: 26px; background: #bdbdbd; margin-left: 2px; flex: none; }
.sep.flush { margin-left: 0; }
.doc { display: flex; align-items: center; gap: 9px; width: 235px; padding-left: 8px; flex: none; }
.doc-title { font-size: 14px; font-weight: bold; color: #707070; white-space: nowrap; }
.n1 { font: bold 12px "Liberation Sans", Arial, sans-serif; fill: #14988c; }
.window-tools { display: flex; margin-left: auto; }
.help { font-family: Roboto, sans-serif; font-size: 22px; color: #444; }

.rail { background: #f1f1f1; display: flex; flex-direction: column; }
.rail-menu { height: 40px; }
.rail-tab { width: 40px; color: #444; }
.rail-tab span { writing-mode: vertical-rl; transform: rotate(180deg); }
.t1 { height: 69px; } .t2 { height: 88px; } .t3 { height: 116px; margin-bottom: 20px; }
.rail-tab.active { background: #1e7672; color: #fff; }
.rail-icon { height: 44px; width: 40px; }
.rail-icon.on { background: #9e9e9e; }

.panel { background: #fff; border-right: 1px solid #d9d9d9; min-width: 0; }
.tech { height: 198px; border-bottom: 1px solid #d9d9d9; }
.panel-head { display: flex; align-items: center; justify-content: space-between; height: 39px; padding: 0 8px 0 15px; }
.pick {
  appearance: none; border: 0; margin: 0; padding: 0 16px 0 0; font: inherit; color: #5c5c5c;
  background: linear-gradient(to bottom left, #777 50%, transparent 50%) right 5px center / 5px 5px no-repeat,
              linear-gradient(to bottom right, #777 50%, transparent 50%) right center / 5px 5px no-repeat;
}
.pick.bold { font-weight: bold; width: 147px; }
.pick.soft { width: 124px; color: #999; }
.panel-head.second { height: 41px; padding: 0 19px 0 14px; }
.tools-row { display: flex; align-items: center; height: 32px; padding: 0 6px 0 17px; gap: 19px; }
.tools-row .push { margin-left: auto; }
.toggle { display: flex; align-items: center; gap: 4px; margin-left: -5px; color: #555; }
.toggle input { appearance: none; margin: 0; width: 20px; height: 13px; border-radius: 7px; background: radial-gradient(circle at 13px 50%, #fff 5px, #218c85 6px); }
.tree { list-style: none; margin: 15px 13px 0 14px; padding: 0; }
.tree li { height: 22px; display: flex; align-items: center; color: #383838; padding-right: 24px; background: linear-gradient(#d02a44, #d02a44) no-repeat 304px bottom / 1px 4px; }
.tree .lead { margin-right: 5px; margin-left: 1px; }
.tree .chev { margin-right: 5px; }
.tree .mark { margin-left: auto; }
.tree-name { margin-left: 2px; white-space: nowrap; }
.tree .lead + .tree-name { margin-left: 0; }
.tree .sel { background-color: #e4e4e4; border-radius: 3px; padding-left: 22px; padding-right: 5px; }
.sel .tool-no { color: #2a9286; margin-left: auto; }
.sel .tool-name { color: #8b8b8b; margin-left: 17px; }
.tree .sel .mark { margin-left: 9px; }
.dot { width: 10px; height: 10px; border-radius: 50%; background: #83b3b4; margin-left: 9px; }

.row { display: flex; align-items: center; height: 29px; padding-left: 14px; }
.name { width: 166px; flex: none; display: flex; align-items: center; overflow: hidden; white-space: nowrap; color: #3a3a3a; margin-right: 4px; }
.name.b { font-weight: bold; color: #4d4d4d; }
.i0 { padding-left: 8px; } .i0 .chev { margin-right: 3px; }
.i1 { padding-left: 20px; }
.i2 { padding-left: 22px; } .i2 .chev { margin-right: 5px; }
.i3 { padding-left: 52px; }
.val { color: #6e6e6e; white-space: nowrap; }
.teal { color: #2aa596; }
.corner { margin: 0 5px; border: 3px solid #e00b0b; padding-bottom: 6px; }
.corner .row { height: 21px; padding-left: 6px; margin-right: 3px; }
.corner .row.first { height: 22px; }
.corner .sel { background: #e4e4e4; margin-left: 6px; padding-left: 0; border-radius: 3px; padding-right: 5px; }
.check { appearance: none; width: 13px; height: 13px; margin: 0; border: 1px solid #2a6d94; background: #f4f9ee; display: grid; place-items: center; }
.check::after { content: ""; width: 4px; height: 8px; border: solid #3d9a30; border-width: 0 2px 2px 0; transform: rotate(40deg); }
.action { flex: 1; min-width: 0; padding-right: 10px; color: #777; }

.view { position: relative; overflow: hidden; background: #dfdfdd; }
.scene { width: 100%; height: 100%; }
.axis { font: 15px "Liberation Sans", Arial, sans-serif; fill: #c4154c; }
.strip { position: absolute; right: 6px; top: 12px; width: 40px; display: grid; gap: 12px; }
.group { background: #fff; }
.group button { width: 40px; height: 34px; border-bottom: 1px solid #fff; }
.group.tall { padding-top: 3px; }
.group .on { background: #999; }
.group button:last-child { border-bottom: 0; }
.status { position: absolute; right: 6px; bottom: 2px; display: flex; align-items: center; font: 14px Roboto, sans-serif; color: #3d3d3d; }
.status .cs { margin: 0 8px 0 20px; }
.status .bell { margin-left: 36px; }
.small { font-size: 11px; margin: 0 12px 0 2px; }
.pct { margin-right: 8px; }

.pop { position: absolute; left: 13px; top: 248px; width: 344px; background: #fff; border: 1px solid #cfcfcf; padding-bottom: 25px; }
.pop-arrow { position: absolute; left: -10px; top: 389px; }
.pop header { display: grid; grid-template-columns: 42px 1fr 42px; height: 42px; align-items: center; text-align: center; }
.pop header h3 { grid-column: 2; }
.pop header button { height: 42px; }
.chart { width: 100%; margin-bottom: 9px; }
.desc { margin: 0 12px 0 11px; padding: 13px 24px 13px 15px; border-radius: 8px; background: #f8f8f8; line-height: 16px; color: #4d4d4d; }
.chart text { font-family: "Open Sans", "Noto Sans", sans-serif; }
.big, .alpha { font-size: 17px; }
.green { font-size: 13px; fill: #1d8a2a; }
.yellow { font-size: 13px; fill: #f0cf24; }
.orange { font-size: 13px; fill: #f5853f; }
```
FILE: scene.js
```js
// Builds the printed pyramid out of stacked bead layers.
const NS = "http://www.w3.org/2000/svg";
const host = document.getElementById("print");
const LAYERS = 34;

function path(d, stroke, width, fill, dash) {
  const p = document.createElementNS(NS, "path");
  p.setAttribute("d", d);
  p.setAttribute("fill", fill || "none");
  if (stroke) {
    p.setAttribute("stroke", stroke);
    p.setAttribute("stroke-width", width);
    p.setAttribute("stroke-linecap", dash ? "butt" : "round");
    p.setAttribute("stroke-linejoin", "round");
    if (dash) p.setAttribute("stroke-dasharray", dash);
  }
  host.appendChild(p);
}
const mix = (a, b, t) => [a[0] + (b[0] - a[0]) * t, a[1] + (b[1] - a[1]) * t];
const at = (p, dy) => `${p[0].toFixed(1)} ${(p[1] + dy).toFixed(1)}`;

path("M798 143L662 371 818 452 848 167z", null, 0, "#f58f00");
path("M848 167L818 452Q905 370 1014 340L898 143z", null, 0, "#984f00");
for (let i = LAYERS; i >= 0; i--) {
  const t = i / LAYERS;
  const left = mix([800, 145], [664, 369], t);
  const mid = mix([848, 170], [818, 447], t);
  const right = mix([895, 146], [1012, 339], t);
  const bend = mix([872, 157], [905, 366], t);
  path(`M${at(left, 3)}L${at(mid, 3)}`, "#d27600", 3);
  path(`M${at(left, 0)}L${at(mid, 0)}`, "#ff9500", 5);
  path(`M${at(left, -1)}L${at(mid, -1)}`, "#ffa214", 2);
  const curve = (dy) => `M${at(mid, dy)}Q${at(bend, dy)} ${at(right, dy)}`;
  path(curve(3), "#934b00", 3);
  path(curve(0), "#ab5a00", 4);
  path(curve(-1), "#e88600", 2);
  path(curve(1), "#934b00", 2, null, `${14 + (i * 7) % 23} ${5 + (i * 5) % 9}`);
  path(`M${at(right, -5)}L${at(right, 1)}`, "#c26c00", 2);
}
path("M848 116L801 144 848 170 895 144z", "#f68e00", 5, "#d47c00");
for (let k = 1; k < 9; k++) {
  const a = mix([848, 119], [806, 144], k / 9);
  const b = mix([890, 144], [848, 167], k / 9);
  path(`M${at(a, 0)}L${at(b, 0)}`, "#ff9f18", 3);
}
```
